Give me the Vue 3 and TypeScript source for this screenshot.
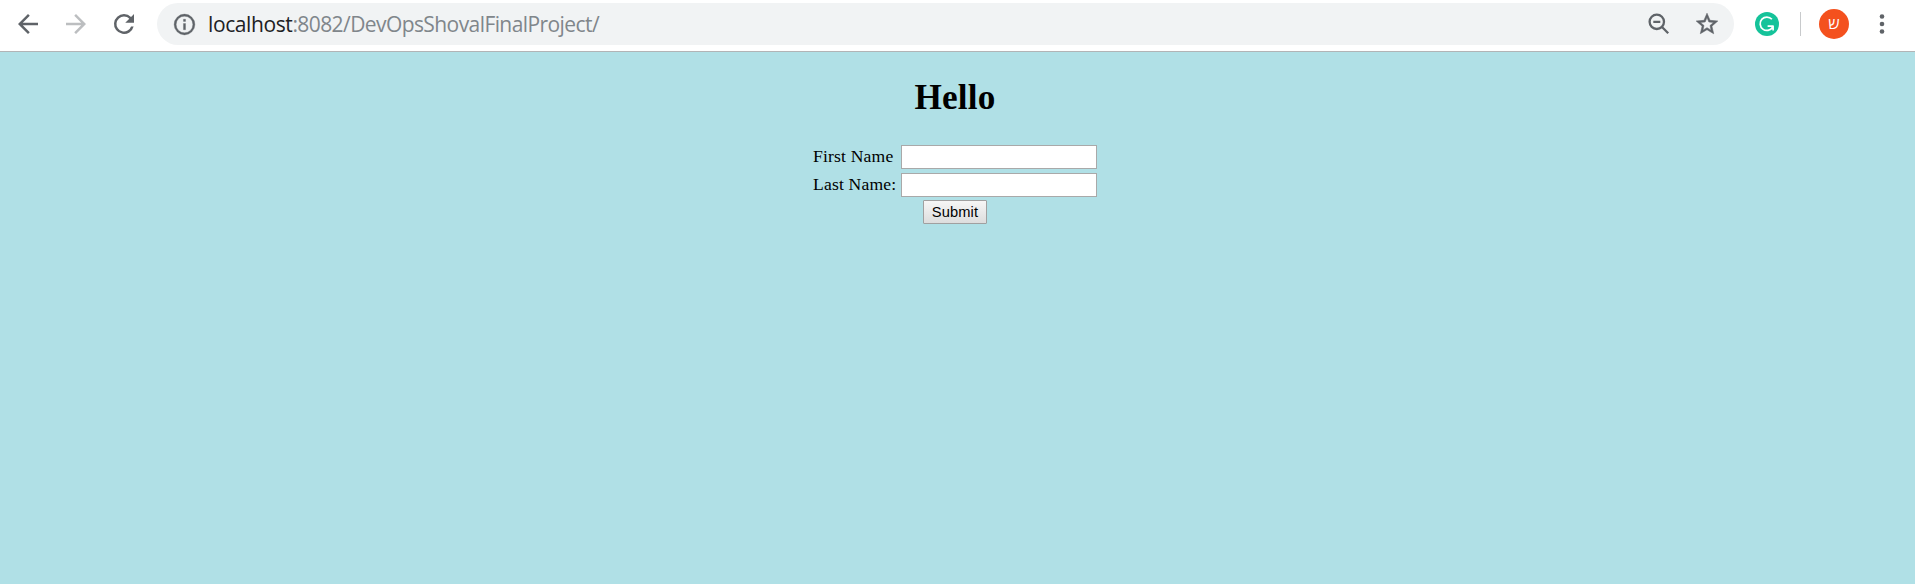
<script setup lang="ts">
import { ref } from 'vue'

const host = 'localhost'
const path = ':8082/DevOpsShovalFinalProject/'
const firstName = ref('')
const lastName = ref('')
</script>

<template>
  <div class="browser">
    <header class="toolbar">
      <nav class="nav">
        <svg class="nav-icon" viewBox="0 0 24 24"><path d="M20 11H7.83l5.59-5.59L12 4l-8 8 8 8 1.41-1.41L7.83 13H20v-2z" /></svg>
        <svg class="nav-icon disabled" viewBox="0 0 24 24"><path d="M12 4l-1.41 1.41L16.17 11H4v2h12.17l-5.58 5.59L12 20l8-8z" /></svg>
        <svg class="nav-icon" viewBox="0 0 24 24"><path d="M17.65 6.35A7.96 7.96 0 0 0 12 4a8 8 0 1 0 7.73 10h-2.08A6 6 0 1 1 12 6c1.66 0 3.14.69 4.22 1.78L13 11h7V4l-2.35 2.35z" /></svg>
      </nav>
      <div class="omnibox">
        <svg class="info" viewBox="0 0 24 24"><path d="M11 17h2v-6h-2v6zm1-15a10 10 0 1 0 0 20 10 10 0 0 0 0-20zm0 18a8 8 0 1 1 0-16 8 8 0 0 1 0 16zM11 9h2V7h-2v2z" /></svg>
        <div class="url"><span class="host">{{ host }}</span><span class="path">{{ path }}</span></div>
        <svg class="zoom" viewBox="0 0 22 22"><circle cx="8.8" cy="8.8" r="7.2" /><path d="M5.3 8.8h7M14 14l6.2 6.2" /></svg>
        <svg class="star" viewBox="0 0 24 24"><path d="M22 9.24l-7.19-.62L12 2 9.19 8.63 2 9.24l5.46 4.73L5.82 21 12 17.27 18.18 21l-1.63-7.03L22 9.24zM12 15.4l-3.76 2.27 1-4.28-3.32-2.88 4.38-.38L12 6.1l1.71 4.04 4.38.38-3.32 2.88 1 4.28L12 15.4z" /></svg>
      </div>
      <svg class="extension" viewBox="0 0 24 24">
        <circle cx="12" cy="12" r="12" fill="#15c39a" />
        <path d="M16.9 7.3A6.7 6.7 0 1 0 17.6 15.2M12.6 14.2H18.1M18.1 13.4v5.2" fill="none" stroke="#fff" stroke-width="1.7" />
      </svg>
      <span class="divider"></span>
      <span class="avatar">ש</span>
      <svg class="menu" viewBox="0 0 6 20"><circle cx="3" cy="2.5" r="2.3" /><circle cx="3" cy="10" r="2.3" /><circle cx="3" cy="17.5" r="2.3" /></svg>
    </header>

    <main class="page">
      <h1>Hello</h1>
      <form @submit.prevent>
        <div class="fields">
          <label for="first">First Name</label>
          <input id="first" v-model="firstName" type="text" />
          <label for="last">Last Name:</label>
          <input id="last" v-model="lastName" type="text" />
        </div>
        <button type="submit">Submit</button>
      </form>
    </main>
  </div>
</template>

<style>
body {
  margin: 0;
}
</style>

<style scoped>
.browser {
  display: flex;
  flex-direction: column;
  height: 584px;
  overflow: hidden;
}
.toolbar {
  display: flex;
  align-items: center;
  box-sizing: border-box;
  height: 52px;
  flex: none;
  padding: 0 30px 3px 13px;
  background: #fff;
  border-bottom: 1px solid #b2b4b6;
}
svg {
  display: block;
  flex: none;
  fill: #5f6368;
}
.nav {
  display: flex;
  gap: 18px;
  width: 144px;
  flex: none;
  margin-top: -1px;
}
.nav-icon {
  width: 30px;
  height: 30px;
}
.disabled {
  fill: #bcbec0;
}
.omnibox {
  display: flex;
  align-items: center;
  box-sizing: border-box;
  width: 1577px;
  height: 42px;
  flex: none;
  padding: 0 14px 0 15px;
  border-radius: 21px;
  background: #f1f3f4;
}
.info {
  width: 25px;
  height: 25px;
  stroke: #5f6368;
  stroke-width: 0.3;
}
.url {
  flex: 1;
  margin-left: 11px;
  font: 21px/42px "Open Sans", "Noto Sans", sans-serif;
  white-space: nowrap;
}
.host {
  color: #202124;
  letter-spacing: -0.4px;
}
.path {
  color: #80868b;
  letter-spacing: -0.58px;
}
.zoom {
  width: 22px;
  height: 22px;
  margin-right: 24px;
  fill: none;
  stroke: #5f6368;
  stroke-width: 2.3;
}
.star {
  width: 26px;
  height: 26px;
  stroke: #5f6368;
  stroke-width: 0.5;
}
.extension {
  width: 24px;
  height: 24px;
  margin-left: 21px;
}
.divider {
  width: 1px;
  height: 24px;
  margin: 0 18px 0 21px;
  background: #c8cacc;
}
.avatar {
  width: 30px;
  height: 30px;
  border-radius: 50%;
  background: #f4511e;
  color: #fff;
  font: 16px/29px "Open Sans", "DejaVu Sans", sans-serif;
  text-align: center;
}
.menu {
  width: 6px;
  height: 20px;
  margin-left: 30px;
}
.page {
  flex: 1;
  padding-right: 5px;
  background: #b0e0e6;
  color: #000;
  font: 17.6px/20px "Liberation Serif", serif;
}
h1 {
  margin: 26px 0 27px;
  font-size: 35.2px;
  line-height: 40px;
  letter-spacing: 0.2px;
  text-align: center;
}
form {
  display: flex;
  flex-direction: column;
  align-items: center;
}
.fields {
  display: grid;
  grid-template-columns: 84px 196px;
  column-gap: 4px;
  row-gap: 4px;
  align-items: center;
}
label {
  padding-bottom: 2px;
  letter-spacing: 0.17px;
  white-space: nowrap;
}
input {
  box-sizing: border-box;
  width: 196px;
  height: 24px;
  padding: 1px 3px;
  border: 1px solid #a9a9a9;
  border-radius: 0;
  background: #fff;
  outline: none;
}
button {
  box-sizing: border-box;
  width: 64px;
  height: 24px;
  margin-top: 3px;
  padding: 0;
  border: 1px solid #a0a0a0;
  border-radius: 1px;
  background: linear-gradient(#f6f6f6, #dddddd);
  color: #000;
  font: 14.67px/23px "Liberation Sans", sans-serif;
  letter-spacing: 0.15px;
}
</style>
